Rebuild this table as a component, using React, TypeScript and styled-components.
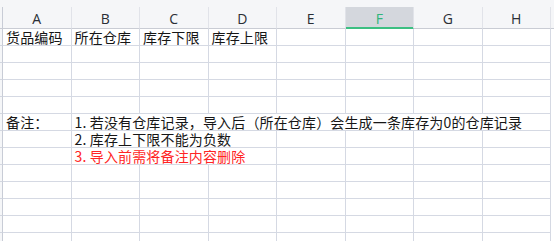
import styled, { createGlobalStyle } from 'styled-components';

const GlobalStyle = createGlobalStyle`
  html, body {
    margin: 0;
    padding: 0;
    background: #ffffff;
  }
  * {
    box-sizing: border-box;
  }
`;

const columns = ['A', 'B', 'C', 'D', 'E', 'F', 'G', 'H'];
const activeColumn = 'F';

const gridTemplate = `3px repeat(8, 68.5px) 1fr`;

const Sheet = styled.div`
  width: 554px;
  height: 241px;
  overflow: hidden;
  background: #ffffff;
  font-family: 'Noto Sans CJK SC', 'Noto Sans', sans-serif;
`;

const HeaderRow = styled.div`
  display: grid;
  grid-template-columns: ${gridTemplate};
  padding-top: 7px;
  background: #f5f6f8;
`;

const Corner = styled.div`
  height: 22px;
  border-right: 1px solid #c8ccd6;
  border-bottom: 1px solid #c9ccd4;
`;

const ColHeader = styled.div<{ $active?: boolean }>`
  height: 22px;
  display: flex;
  align-items: center;
  justify-content: center;
  font-family: 'Open Sans', 'Noto Sans', sans-serif;
  font-size: 14px;
  color: ${({ $active }) => ($active ? '#2fb57a' : '#2a2e35')};
  background: ${({ $active }) => ($active ? '#d4d7dd' : 'transparent')};
  border-right: 1px solid #e1e3e9;
  border-bottom: 1px solid ${({ $active }) => ($active ? '#3cbf82' : '#c9ccd4')};
  box-shadow: ${({ $active }) => ($active ? 'inset 0 -1px 0 #3cbf82' : 'none')};
  padding-top: 1px;
`;

const HeaderFill = styled.div`
  height: 22px;
  border-bottom: 1px solid #c9ccd4;
`;

const Row = styled.div`
  display: grid;
  grid-template-columns: ${gridTemplate};
  height: 17px;
`;

const RowHead = styled.div`
  background: #f5f6f8;
  border-right: 1px solid #c8ccd6;
  border-bottom: 1px solid #d3d7e0;
`;

const Cell = styled.div<{ $span?: number; $red?: boolean }>`
  grid-column: span ${({ $span }) => $span ?? 1};
  border-right: 1px solid #d5d9e3;
  border-bottom: 1px solid #d5d9e3;
  padding-left: 3px;
  font-size: 14px;
  line-height: 16px;
  letter-spacing: 0.15px;
  white-space: nowrap;
  color: ${({ $red }) => ($red ? '#ff2424' : '#161616')};
`;

type RowData = { cells: { text?: string; span?: number; red?: boolean }[] };

const empty = (): RowData => ({ cells: columns.map(() => ({})) });

const rows: RowData[] = [
  {
    cells: [
      { text: '货品编码' },
      { text: '所在仓库' },
      { text: '库存下限' },
      { text: '库存上限' },
      {},
      {},
      {},
      {},
    ],
  },
  empty(),
  empty(),
  empty(),
  empty(),
  {
    cells: [
      { text: '备注：' },
      { text: '1. 若没有仓库记录，导入后（所在仓库）会生成一条库存为0的仓库记录', span: 7 },
    ],
  },
  { cells: [{}, { text: '2. 库存上下限不能为负数', span: 3 }, {}, {}, {}, {}] },
  { cells: [{}, { text: '3. 导入前需将备注内容删除', span: 3, red: true }, {}, {}, {}, {}] },
  empty(),
  empty(),
  empty(),
  empty(),
  empty(),
];

export default function App() {
  return (
    <>
      <GlobalStyle />
      <Sheet>
        <HeaderRow>
          <Corner />
          {columns.map((c) => (
            <ColHeader key={c} $active={c === activeColumn}>
              {c}
            </ColHeader>
          ))}
          <HeaderFill />
        </HeaderRow>
        {rows.map((row, i) => (
          <Row key={i}>
            <RowHead />
            {row.cells.map((cell, j) => (
              <Cell key={j} $span={cell.span} $red={cell.red}>
                {cell.text}
              </Cell>
            ))}
          </Row>
        ))}
      </Sheet>
    </>
  );
}
